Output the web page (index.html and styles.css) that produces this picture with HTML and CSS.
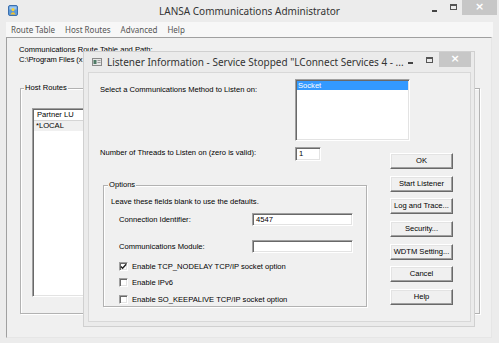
FILE: index.html
```html
<!DOCTYPE html>
<html>
<head>
<meta charset="utf-8">
<link rel="stylesheet" href="styles.css">
</head>
<body>
<div class="win">
  <div class="titlebar">
    <div class="tb-left">
      <svg class="app-icon" width="10" height="11" viewBox="0 0 10 11">
        <rect x="0.5" y="0.5" width="9" height="10" rx="1.5" fill="#5d9ad9" stroke="#3b6fae"/>
        <rect x="1.5" y="1.5" width="7" height="3" fill="#9cc6ef"/>
        <circle cx="5" cy="4.6" r="1.6" fill="#f6d23a"/>
        <path d="M2.3 9.5 Q5 4.8 7.7 9.5 Z" fill="#f2c12e"/>
      </svg>
    </div>
    <div class="tb-title">LANSA Communications Administrator</div>
    <div class="tb-right">
      <span class="ctl-min"></span>
      <span class="ctl-max"></span>
      <span class="ctl-close">×</span>
    </div>
  </div>
  <div class="menubar">
    <span class="menu-item">Route Table</span>
    <span class="menu-item">Host Routes</span>
    <span class="menu-item">Advanced</span>
    <span class="menu-item">Help</span>
  </div>
  <div class="client">
    <div class="txt">Communications Route Table and Path:</div>
    <div class="txt path">C:\Program Files (x</div>
    <div class="group host-group">
      <span class="legend">Host Routes</span>
      <div class="listview">
        <div class="lv-header"><span class="lv-col">Partner LU</span></div>
        <div class="lv-row">*LOCAL</div>
      </div>
    </div>
  </div>

  <div class="dialog">
    <div class="dlg-titlebar">
      <svg class="dlg-icon" width="10" height="8" viewBox="0 0 10 8">
        <rect x="0.5" y="0.5" width="9" height="7" fill="#e6e6e6" stroke="#8a8a8a"/>
        <rect x="1.5" y="2" width="3" height="4" fill="#4f7a66"/>
        <rect x="5.5" y="2" width="3" height="1" fill="#9a9a9a"/>
        <rect x="5.5" y="4" width="3" height="1" fill="#9a9a9a"/>
      </svg>
      <div class="dlg-title">Listener Information - Service Stopped "LConnect Services 4 - ...</div>
      <div class="dlg-ctls">
        <span class="ctl-min"></span>
        <span class="ctl-max"></span>
        <span class="ctl-close dlg-close">×</span>
      </div>
    </div>
    <div class="dlg-client">
      <div class="lbl lbl1">Select a Communications Method to Listen on:</div>
      <div class="listbox">
        <div class="lb-sel">Socket</div>
      </div>
      <div class="lbl lbl2">Number of Threads to Listen on (zero is valid):</div>
      <div class="field threads">1</div>
      <div class="buttons">
        <div class="btn">OK</div>
        <div class="btn">Start Listener</div>
        <div class="btn">Log and Trace...</div>
        <div class="btn">Security...</div>
        <div class="btn">WDTM Setting...</div>
        <div class="btn">Cancel</div>
        <div class="btn">Help</div>
      </div>
      <div class="group options">
        <span class="legend">Options</span>
        <div class="opt-note">Leave these fields blank to use the defaults.</div>
        <div class="opt-row first">
          <span class="opt-lbl">Connection Identifier:</span>
          <span class="field wide">4547</span>
        </div>
        <div class="opt-row second">
          <span class="opt-lbl">Communications Module:</span>
          <span class="field wide"></span>
        </div>
        <div class="checks">
          <div class="chk-row">
            <span class="chk">
              <svg width="7" height="7" viewBox="0 0 7 7"><polyline points="0.8,3.4 2.6,5.3 6.2,1.2" fill="none" stroke="#222" stroke-width="1.4"/></svg>
            </span>
            <span>Enable TCP_NODELAY TCP/IP socket option</span>
          </div>
          <div class="chk-row">
            <span class="chk"></span>
            <span>Enable IPv6</span>
          </div>
          <div class="chk-row">
            <span class="chk"></span>
            <span>Enable SO_KEEPALIVE TCP/IP socket option</span>
          </div>
        </div>
      </div>
    </div>
  </div>
</div>
</body>
</html>
```
FILE: styles.css
```css
* { box-sizing: border-box; }
html, body { margin: 0; padding: 0; }
body { background: #f0f0f0; }

.win {
  position: relative;
  width: 499px;
  height: 343px;
  background: #ececec;
  overflow: hidden;
  font-family: "Liberation Sans", Arial, sans-serif;
  font-size: 7.6px;
  color: #000;
}

/* main title bar */
.titlebar {
  height: 22px;
  display: grid;
  grid-template-columns: 1fr auto 1fr;
  align-items: start;
}
.tb-left { padding: 5px 0 0 8px; }
.app-icon { display: block; }
.tb-title {
  font-family: "Noto Sans", "Open Sans", sans-serif;
  font-size: 10px;
  line-height: 22px;
  color: #333;
  white-space: nowrap;
}
.tb-right {
  display: flex;
  justify-content: flex-end;
  align-items: flex-start;
  padding-right: 2px;
}
.ctl-min {
  width: 5px;
  height: 2px;
  background: #444;
  margin-top: 10px;
}
.ctl-max {
  width: 7px;
  height: 6px;
  border: 1px solid #555;
  border-top-width: 2px;
  margin: 4px 0 0 13px;
}
.ctl-close {
  width: 35px;
  height: 15px;
  margin-left: 5px;
  background: #c7c7c7;
  color: #fff;
  font-family: "DejaVu Sans", sans-serif;
  font-size: 11px;
  font-weight: bold;
  line-height: 14px;
  text-align: center;
}

/* menu */
.menubar {
  margin: 0 6px;
  height: 15px;
  background: #f7f7f7;
  display: flex;
  align-items: center;
  font-family: "Noto Sans", "Open Sans", sans-serif;
  font-size: 8px;
  color: #555;
}
.menu-item { padding: 0 5px; }

/* main client */
.client {
  margin: 0 7px 0 6px;
  height: 301px;
  border: 1px solid;
  border-color: #a0a0a0 #e6e6e6 #e6e6e6 #a0a0a0;
  background: #f0f0f0;
  padding: 7px 0 0 12px;
}
.txt { line-height: 10px; white-space: nowrap; }
.path { letter-spacing: -0.1px; }

.group {
  position: relative;
  border: 1px solid #b2b2b2;
  box-shadow: inset 1px 1px 0 #fff, 1px 1px 0 #fff;
}
.legend {
  position: absolute;
  top: -6px;
  left: 3px;
  padding: 0 1px;
  line-height: 10px;
  background: #f0f0f0;
}
.host-group {
  margin: 23px 0 0 1px;
  width: 460px;
  height: 226px;
  padding: 19px 0 0 11px;
}
.listview {
  width: 435px;
  height: 189px;
  background: #fff;
  border: 1px solid;
  border-color: #a0a0a0 #fff #fff #a0a0a0;
  box-shadow: inset 1px 1px 0 #696969, inset -1px -1px 0 #e3e3e3;
  padding: 1px;
}
.lv-header {
  height: 11px;
  border-bottom: 1px solid #d5d5d5;
  padding-left: 3px;
  line-height: 10px;
  background: #fff;
}
.lv-col {
  display: inline-block;
  width: 60px;
  border-right: 1px solid #e0e0e0;
}
.lv-row {
  height: 10px;
  line-height: 10px;
  padding-left: 2px;
  background: #f0f0f0;
}

/* dialog window */
.dialog {
  position: absolute;
  left: 83px;
  top: 51px;
  width: 392px;
  height: 276px;
  background: #ebebeb;
  border: 1px solid #d0d0d0;
  padding: 0 3px 4px 4px;
  display: flex;
  flex-direction: column;
}
.dlg-titlebar {
  height: 20px;
  display: flex;
  align-items: flex-start;
}
.dlg-icon { margin: 6px 0 0 4px; flex: none; }
.dlg-title {
  font-family: "Noto Sans", "Open Sans", sans-serif;
  font-size: 10px;
  line-height: 20px;
  color: #333;
  margin-left: 5px;
  white-space: nowrap;
  flex: 1;
}
.dlg-ctls {
  display: flex;
  align-items: flex-start;
}
.dlg-ctls .ctl-min { margin-top: 10px; }
.dlg-ctls .ctl-max { margin: 5px 0 0 13px; }
.dlg-close {
  width: 32px;
  height: 15px;
  margin-left: 6px;
}

.dlg-client {
  flex: 1;
  background: #f0f0f0;
  border: 1px solid #d8d8d8;
  display: grid;
  grid-template-columns: 195px 95px 63px;
  grid-template-rows: auto auto auto;
  align-content: start;
  padding: 6px 0 0 11px;
}
.lbl { line-height: 10px; white-space: nowrap; }
.lbl1 { grid-column: 1; grid-row: 1; margin-top: 6px; }
.listbox {
  grid-column: 2 / 4;
  grid-row: 1;
  width: 115px;
  height: 62px;
  background: #fff;
  border: 1px solid;
  border-color: #a0a0a0 #fff #fff #a0a0a0;
  box-shadow: inset 1px 1px 0 #696969, inset -1px -1px 0 #e3e3e3;
  padding: 1px;
}
.lb-sel {
  background: #3399ff;
  color: #fff;
  height: 9px;
  line-height: 9px;
  padding-left: 1px;
}
.lbl2 { grid-column: 1; grid-row: 2; margin-top: 7px; }
.field {
  display: block;
  background: #fff;
  border: 1px solid;
  border-color: #a0a0a0 #fff #fff #a0a0a0;
  box-shadow: inset 1px 1px 0 #696969, inset -1px -1px 0 #e3e3e3;
  line-height: 11px;
  padding-left: 3px;
}
.threads {
  grid-column: 2;
  grid-row: 2;
  width: 26px;
  height: 14px;
  margin-top: 6px;
  line-height: 12px;
}
.buttons {
  grid-column: 3;
  grid-row: 2 / 4;
  margin-top: 12px;
  display: flex;
  flex-direction: column;
  gap: 6.7px;
}
.btn {
  height: 16px;
  background: #f0f0f0;
  border: 1px solid;
  border-color: #fff #696969 #696969 #fff;
  box-shadow: inset -1px -1px 0 #a0a0a0, inset 1px 1px 0 #e3e3e3;
  text-align: center;
  line-height: 14px;
  white-space: nowrap;
}

.options {
  grid-column: 1 / 3;
  grid-row: 3;
  margin: 24px 0 0 3px;
  width: 264px;
  height: 122px;
}
.options .legend { left: 4px; }
.opt-note {
  margin: 11px 0 0 7px;
  line-height: 10px;
}
.opt-row {
  display: flex;
  align-items: center;
  padding-left: 15px;
}
.opt-row.first { margin-top: 6px; }
.opt-row.second { margin-top: 14px; }
.opt-lbl { width: 133px; line-height: 10px; }
.field.wide { width: 101px; height: 13px; }
.checks { margin-top: 4.75px; }
.chk-row {
  height: 16.5px;
  display: flex;
  align-items: center;
  padding-left: 15px;
  gap: 4px;
}
.chk {
  width: 9px;
  height: 9px;
  background: #fff;
  border: 1px solid;
  border-color: #a0a0a0 #fff #fff #a0a0a0;
  box-shadow: inset 1px 1px 0 #696969, inset -1px -1px 0 #e3e3e3;
  display: flex;
  align-items: center;
  justify-content: center;
}
.chk svg { display: block; }
```
